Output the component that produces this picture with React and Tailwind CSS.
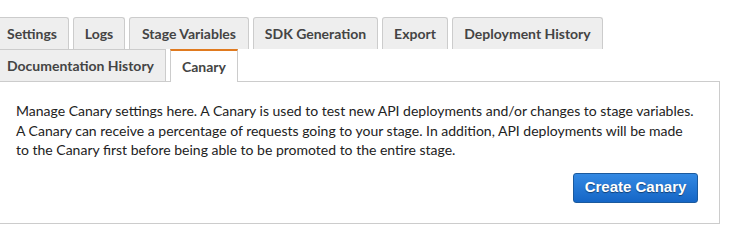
import React from "react";

const Tab = ({ children, w }) => (
  <div
    className={`${w} h-[32px] shrink-0 flex items-center justify-center bg-[#eeeeee] border border-b-0 border-[#cccccc] rounded-t-[3px] text-[14px] font-bold text-[#444444]`}
  >
    {children}
  </div>
);

export default function App() {
  return (
    <div
      className="w-[731px] h-[244px] bg-white overflow-hidden"
      style={{ fontFamily: "Lato, 'Open Sans', sans-serif" }}
    >
      <div className="ml-[-5px] pt-[17px] w-[725px]">
        <div className="flex gap-[4px]">
          <Tab w="w-[74px]">Settings</Tab>
          <Tab w="w-[52px]">Logs</Tab>
          <Tab w="w-[120px]">Stage Variables</Tab>
          <Tab w="w-[125px]">SDK Generation</Tab>
          <Tab w="w-[66px]">Export</Tab>
          <Tab w="w-[151px]">Deployment History</Tab>
        </div>
        <div className="flex gap-[4px] items-end">
          <div className="w-[171px] h-[32px] flex items-center justify-center bg-[#eeeeee] border border-b-0 border-[#cccccc] text-[14px] font-bold text-[#444444]">
            Documentation History
          </div>
          <div className="relative z-10 w-[68px] h-[33px] -mb-px flex items-center justify-center bg-white border-x border-[#cccccc] border-t-[2px] border-t-[#e07a1f] text-[14px] font-bold text-[#444444]">
            Canary
          </div>
        </div>
        <div className="border border-[#cccccc] pl-[20px] pr-[21px] pt-[19px] pb-[20px]">
          <p className="text-[14px] leading-[19.5px] text-[#222222]">
            Manage Canary settings here. A Canary is used to test new API deployments and/or changes to stage variables.
            <br />
            A Canary can receive a percentage of requests going to your stage. In addition, API deployments will be made
            <br />
            to the Canary first before being able to be promoted to the entire stage.
          </p>
          <div className="flex justify-end mt-[13px]">
            <button
              className="w-[125px] h-[30px] rounded-[3px] border border-[#1b5a9e] bg-gradient-to-b from-[#3389e3] to-[#1566c6] text-white text-[15px] font-bold"
              style={{
                fontFamily: "'Liberation Sans', Arial, sans-serif",
                textShadow: "0 1px 1px rgba(0,0,0,0.45)",
              }}
            >
              Create Canary
            </button>
          </div>
        </div>
      </div>
    </div>
  );
}
